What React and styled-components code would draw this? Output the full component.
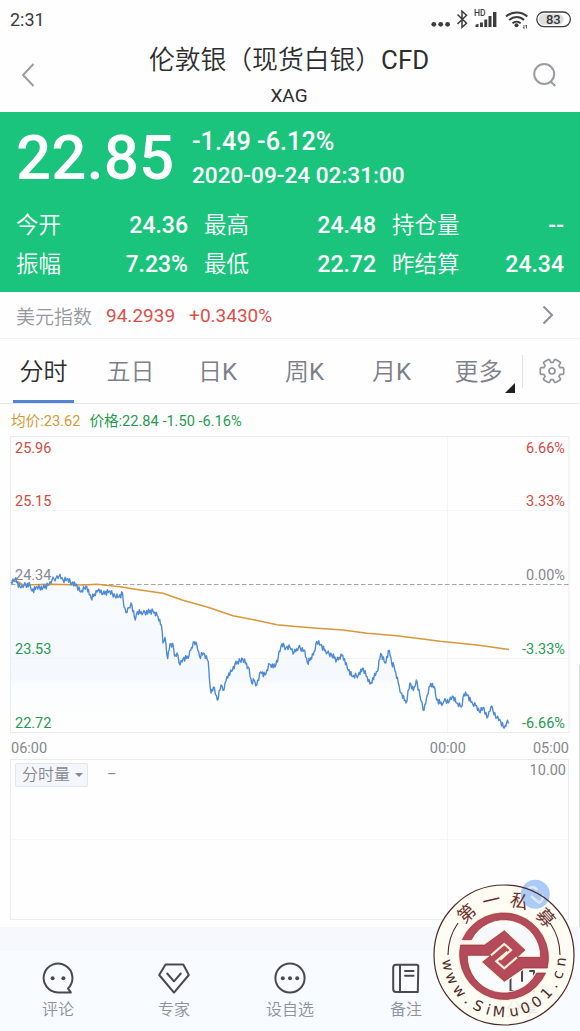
import React from 'react';
import styled, { createGlobalStyle } from 'styled-components';

const AVERAGE = [
  [11.3, 580.7], [18, 581.7], [23, 585], [50, 584.3], [83, 585], [97, 584.3], [120, 586.7], [140, 590],
  [163, 593.3], [183, 600.3], [208, 607.3], [233, 615.7], [255, 620], [277, 624.7], [290, 626],
  [317, 628.3], [343, 630], [367, 633.3], [397, 635.7], [440, 641.3], [477, 645], [509, 649.5],
];

const PRICE = [
  [11, 582], [15, 579], [20, 587], [24, 585], [30, 585], [32, 591], [37, 587], [43, 588], [48, 585],
  [52, 580], [56, 578], [59, 576], [63, 580], [67, 579], [72, 583], [77, 586], [81, 592], [86, 586],
  [91, 598], [97, 592], [99, 589], [103, 594], [109, 591], [115, 596], [119, 597], [122.5, 593],
  [124, 607], [127, 612.5], [131, 603], [135.3, 620], [137.5, 611.5], [143, 613], [153, 611],
  [158, 616.5], [161.3, 625], [163, 643], [165, 637.5], [167.7, 658.5], [170, 644], [173.3, 646],
  [174.5, 656], [177, 653], [180, 665], [183, 659], [189, 656], [191.5, 647.5], [194, 641.5],
  [197, 646], [199.5, 656.5], [203.5, 653], [208.3, 661.5], [209.3, 677], [211, 693], [213.5, 687],
  [217.3, 700], [221, 685], [224, 690], [227, 676.5], [231.5, 671.5], [235, 664], [242.7, 659],
  [248.3, 667], [251.7, 683], [254, 680], [256.7, 685], [260.7, 672], [265, 675], [269.5, 664],
  [275, 667], [278.3, 656.5], [281.7, 644], [286, 648], [290, 647.5], [294, 652.5], [298.5, 647.5],
  [304, 650], [307.3, 662.5], [313.3, 655], [316.7, 641.5], [320.7, 645], [327.3, 653], [331.7, 655],
  [336.7, 660], [342.7, 655], [347.3, 668], [352.7, 676.5], [358.3, 675], [363.3, 668.5], [370, 684],
  [377.3, 671.5], [380.7, 653.5], [385, 663], [389.3, 650.5], [391.7, 663], [394, 666], [398.3, 683],
  [401, 693], [406, 703], [410, 683], [413.3, 690.5], [416.3, 680], [420, 696.5], [424, 710.5],
  [427.3, 695], [430.7, 683.5], [434, 686.5], [436.7, 700], [442.7, 704], [444, 701], [449.3, 701],
  [453.3, 696.5], [456.7, 703], [461.3, 707], [464, 694], [467.3, 695], [472.7, 704], [476.7, 706],
  [479.3, 711.5], [484, 708], [487, 718], [491, 706.5], [496.7, 718], [500.7, 721.5], [504.3, 728],
  [506.7, 722.5], [509, 723],
];

const NOISE = [0, 2.2, -1.4, 1.7, -2.4, 0.8, -1.2, 2.6, -2, 1.1, -0.6, 1.8, -2.2];

// minute ticks between the main turning points
function withTicks(points) {
  const out = [];
  let n = 0;
  points.forEach(([x, y], i) => {
    out.push([x, y]);
    const next = points[i + 1];
    if (!next) return;
    const steps = Math.max(1, Math.round((next[0] - x) / 0.9));
    for (let s = 1; s < steps; s += 1) {
      const t = s / steps;
      n += 1;
      out.push([x + (next[0] - x) * t, y + (next[1] - y) * t + NOISE[n % NOISE.length] * 1.1]);
    }
  });
  return out;
}

const toPath = (points) => points.map(([x, y]) => `${x.toFixed(1)},${y.toFixed(1)}`).join(' ');

const priceTicks = toPath(withTicks(PRICE));

// six teeth, each with a base and a tip on both sides
const gear = toPath(
  [0, 60, 120, 180, 240, 300].flatMap((tooth) =>
    [[-22, 8.8], [-17, 11.6], [-12, 12], [12, 12], [17, 11.6], [22, 8.8]].map(([offset, r]) => {
      const a = ((tooth + offset) * Math.PI) / 180;
      return [13 + r * Math.cos(a), 13 + r * Math.sin(a)];
    })
  )
);

const STATS = [
  ['今开', '24.36'], ['最高', '24.48'], ['持仓量', '--'],
  ['振幅', '7.23%'], ['最低', '22.72'], ['昨结算', '24.34'],
];

const TABS = [['分时'], ['五日'], ['日', 'K'], ['周', 'K'], ['月', 'K'], ['更多']];

const LEVELS = [
  ['25.96', '6.66%', '#d24b45', 13],
  ['25.15', '3.33%', '#d24b45', 66],
  ['24.34', '0.00%', '#85878e', 140],
  ['23.53', '-3.33%', '#1f9c50', 214],
  ['22.72', '-6.66%', '#1f9c50', 288],
];

function StatusIcons() {
  return (
    <svg width="144" height="24" viewBox="428 8 144 24" fill="none" stroke="#3c3c3c">
      <g fill="#3c3c3c" stroke="none">
        <circle cx="433.8" cy="24.3" r="2.4" />
        <circle cx="440.7" cy="24.3" r="2.4" />
        <circle cx="447.6" cy="24.3" r="2.4" />
        <path d="M475.5 27v-2.2l3-1V27zM480 27v-4.5h2.9V27zM484.3 27v-7.5h2.9V27zM488.5 27V16h3v11zM493 27V12h3.4v15z" />
        <circle cx="516.5" cy="25.3" r="2" />
      </g>
      <path d="M457.5 14.5l9 8.8-4.5 4V11.2l4.5 4-9 8.8" strokeWidth="1.5" />
      <text x="474" y="16.2" fill="#3c3c3c" stroke="none" fontSize="8.5" fontWeight="500" fontFamily="Roboto, sans-serif">HD</text>
      <path d="M506 16.6c6-5.4 15.5-5.4 21.3 0M509.2 20.1c4.4-4 10.5-4 14.8 0M512.5 23.3c2.4-2.2 5.8-2.2 8.2 0" strokeWidth="2" />
      <path d="M524 25v3.5M526.4 25v3.5M523.2 27.2l.8 1.3M525.6 26.3l.8-1.3" strokeWidth="0.8" />
      <rect x="536.8" y="12" width="33.6" height="14.6" rx="7.3" fill="#fff" strokeWidth="1.3" />
      <rect x="538.6" y="13.8" width="25" height="11" rx="5.5" fill="#dedede" stroke="none" />
      <text x="553.3" y="23.8" fill="#333" stroke="none" textAnchor="middle" fontSize="13" fontWeight="500" fontFamily="Roboto, sans-serif">83</text>
    </svg>
  );
}

function PriceChart() {
  return (
    <ChartSvg viewBox="10 436 560 297" width="560" height="297">
      <defs>
        <linearGradient id="area" x1="0" y1="575" x2="0" y2="715" gradientUnits="userSpaceOnUse">
          <stop offset="0" stopColor="#f7fbfe" />
          <stop offset="0.75" stopColor="#f5f9fe" />
          <stop offset="0.78" stopColor="#fafcff" />
          <stop offset="1" stopColor="#fefefe" />
        </linearGradient>
      </defs>
      <polygon points={`11,732 ${priceTicks} 509,732`} fill="url(#area)" />
      <path d="M11 510.5h558M11 658.5h558M447.5 437v295" stroke="#f3f5f7" fill="none" />
      <rect x="10.5" y="436.5" width="558.5" height="296" fill="none" stroke="#e9ecef" />
      <path d="M11 584.5h558" stroke="#a2a4a8" strokeDasharray="4.5 2.5" fill="none" />
      <polyline points={toPath(AVERAGE)} fill="none" stroke="#d9973a" strokeWidth="1.5" />
      <polyline points={priceTicks} fill="none" stroke="#4f8ad8" strokeWidth="1.4" strokeLinejoin="round" />
    </ChartSvg>
  );
}

const TOP_TEXT = [['第', -42], ['一', -13], ['私', 16], ['募', 48]];
const SITE_TEXT = [
  ['w', 80], ['w', 66], ['w', 51], ['.', 39], ['S', 27], ['i', 16], ['M', 5],
  ['u', -10], ['0', -22], ['0', -35], ['1', -48], ['.', -59], ['c', -70], ['n', -83],
];

const COIN = 'M21 96A135 135 0 0 1 276 181L205 181 147 221 82 163 107 143 36 143A110 110 0 0 0 244 196L271 196A135 135 0 0 1 16 112L88 112 147 69 209 127 185 149 256 149A110 110 0 0 0 48 96Z';

function Stamp() {
  return (
    <StampSvg width="144" height="144" viewBox="-72 -72 144 144">
      <path d="M-70 0a70 70 0 1 0 140 0a70 70 0 1 0-140 0zM-45 1a45 45 0 1 1 90 0a45 45 0 1 1-90 0z" fillRule="evenodd" fill="#fffdf0" fillOpacity="0.82" />
      <circle cx="31.3" cy="-60.8" r="14.5" fill="#a9cbf5" />
      <path d="M24-66c3-3 8-2 9 1M38-60c2 3 0 7-4 8M27-59l7 6" stroke="#dce9fa" strokeWidth="2.5" fill="none" />
      <circle r="70" fill="none" stroke="#4e2a28" strokeWidth="1.2" />
      <path d="M-56 0A56 56 0 0 1-46-32M46-32A56 56 0 0 1 56 0" fill="none" stroke="#4e2a28" strokeWidth="1.1" />
      <g transform="translate(-48.7 -47.3) scale(.3333)">
        <path d={COIN} fill="#b54a5c" stroke="#fff3d2" strokeWidth="9" strokeLinejoin="round" paintOrder="stroke" />
        <path d={COIN} fill="none" stroke="#8b2e40" strokeWidth="2" />
        <path d="M107 143L147 109 167 127 135 156M185 149L147 182 123 161 156 132" fill="none" stroke="#fff3d2" strokeWidth="6.5" />
      </g>
      {TOP_TEXT.map(([char, angle]) => (
        <StampHan key={char} transform={`rotate(${angle}) translate(0 -49.5)`}>{char}</StampHan>
      ))}
      {SITE_TEXT.map(([char, angle]) => (
        <StampLatin key={angle} transform={`rotate(${angle}) translate(0 62)`}>{char}</StampLatin>
      ))}
    </StampSvg>
  );
}

function NavDot({ x }) {
  return <circle cx={x} cy="17.2" r="2" fill="#4a4a4c" stroke="none" />;
}

const NAV = [
  ['评论', <><path d="M27 27.4A14.4 14.4 0 1 0 17 31.4H29.8Z" /><NavDot x={11.6} /><NavDot x={22.4} /></>],
  ['专家', <path d="M8.5 3.5h17.8L31.8 14 17 31.6 2.2 14zM10.2 12.5l6.8 7.8 6.8-7.8" />],
  ['设自选', <><circle cx="17" cy="17" r="14.6" /><NavDot x={9.8} /><NavDot x={17} /><NavDot x={24.2} /></>],
  ['备注', <path d="M7 3.8h20.5q1.8 0 1.8 1.8L28.8 31H7q-2.8 0-2.8-3V6.8q0-3 2.8-3zM11 4v27M16 10h8.5M16 14.8h8.5" />],
  ['分享', <path d="M9 10H5.5v20H29V10h-4M17 20V9" />],
];

function App() {
  return (
    <Screen>
      <GlobalStyle />
      <StatusBar>
        <span>2:31</span>
        <StatusIcons />
      </StatusBar>

      <Header>
        <HeaderSide>
          <svg width="14" height="24" viewBox="0 0 14 24" fill="none" stroke="#9a9ca3" strokeWidth="2">
            <path d="M12.5 1L2 12l10.5 11" />
          </svg>
        </HeaderSide>
        <Heading>
          <Title>伦敦银（现货白银）<Latin>CFD</Latin></Title>
          <Symbol>XAG</Symbol>
        </Heading>
        <HeaderSide $end>
          <svg width="24" height="24" viewBox="0 0 24 24" fill="none" stroke="#9a9ca3" strokeWidth="2">
            <circle cx="11.2" cy="11" r="10" />
            <path d="M17.5 18.5l4.8 4.5" />
          </svg>
        </HeaderSide>
      </Header>

      <Quote>
        <QuoteTop>
          <Price>22.85</Price>
          <div>
            <Change>-1.49 -6.12%</Change>
            <Time>2020-09-24 02:31:00</Time>
          </div>
        </QuoteTop>
        <Stats>
          {STATS.map(([label, value]) => (
            <Stat key={label}>
              <StatLabel>{label}</StatLabel>
              <span>{value}</span>
            </Stat>
          ))}
        </Stats>
      </Quote>

      <IndexRow>
        <IndexName>美元指数</IndexName>
        <span>94.2939</span>
        <span>+0.3430%</span>
        <svg width="12" height="20" viewBox="0 0 12 20" fill="none" stroke="#8d8f96" strokeWidth="2">
          <path d="M1.5 1.5l8.5 8.5-8.5 8.5" />
        </svg>
      </IndexRow>

      <Tabs>
        {TABS.map(([tab, latin], i) => (
          <Tab key={tab} $active={i === 0}>
            {tab}
            {latin && <Latin>{latin}</Latin>}
            {tab === '更多' && <Corner />}
          </Tab>
        ))}
        <Settings>
          <svg width="26" height="26" viewBox="0 0 26 26" fill="none" stroke="#93959c" strokeWidth="1.7" strokeLinejoin="round">
            <polygon points={gear} />
            <circle cx="13" cy="13" r="3" />
          </svg>
        </Settings>
      </Tabs>

      <Legend>
        <LegendItem $color="#d69a35">均价:23.62</LegendItem>
        <LegendItem $color="#1f9c50">价格:22.84 -1.50 -6.16%</LegendItem>
      </Legend>

      <Chart>
        <PriceChart />
        {LEVELS.map(([price, percent, color, y]) => (
          <Level key={price} $color={color} $y={y}>
            <span>{price}</span>
            <span>{percent}</span>
          </Level>
        ))}
      </Chart>
      <TimeAxis>
        <span>06:00</span>
        <Midnight>00:00</Midnight>
        <span>05:00</span>
      </TimeAxis>

      <Volume>
        <VolumeHead>
          <VolumeSelect>
            分时量
            <Caret />
          </VolumeSelect>
          <span>–</span>
          <VolumeMax>10.00</VolumeMax>
        </VolumeHead>
      </Volume>
      <Strip />

      <Nav>
        {NAV.map(([label, icon]) => (
          <NavItem key={label}>
            <NavIcon viewBox="0 0 34 34">{icon}</NavIcon>
            {label}
          </NavItem>
        ))}
      </Nav>

      <ScrollBar />
      <Stamp />
    </Screen>
  );
}

export default App;

const GlobalStyle = createGlobalStyle`
  * {
    box-sizing: border-box;
  }
  body {
    margin: 0;
    background: #fff;
    font-family: Roboto, "Noto Sans CJK SC", sans-serif;
  }
  svg {
    display: block;
    flex-shrink: 0;
  }
`;

const Screen = styled.div`
  position: relative;
  width: 580px;
  height: 1031px;
  overflow: hidden;
  display: flex;
  flex-direction: column;
  background: #fefefe;
`;

const Latin = styled.span`
  font-weight: 400;
`;

const StatusBar = styled.div`
  height: 40px;
  flex-shrink: 0;
  padding: 0 8px 2px 10px;
  display: flex;
  align-items: center;
  justify-content: space-between;
  font-size: 18px;
  color: #3c3c3c;

  svg {
    margin-top: 2px;
  }
`;

const Header = styled.div`
  height: 72px;
  flex-shrink: 0;
  padding: 0 23px 0 21px;
  display: flex;
  align-items: center;
`;

const HeaderSide = styled.div`
  flex: 1;
  display: flex;
  justify-content: ${({ $end }) => ($end ? 'flex-end' : 'flex-start')};
  padding-bottom: 2px;
`;

const Heading = styled.div`
  text-align: center;
  color: #2e2e30;
`;

const Title = styled.div`
  font-size: 25.8px;
  font-weight: 350;
  line-height: 39px;
  white-space: nowrap;
`;

const Symbol = styled.div`
  font-size: 19px;
  line-height: 32px;
`;

const Quote = styled.div`
  height: 180px;
  flex-shrink: 0;
  padding: 12px 16px 0;
  background: #1bc47d;
  color: #fff;
`;

const QuoteTop = styled.div`
  display: flex;
  height: 82px;
`;

const Price = styled.div`
  width: 176px;
  font-size: 62px;
  font-weight: 500;
  line-height: 67px;
`;

const Change = styled.div`
  font-size: 25.3px;
  font-weight: 500;
  line-height: 35px;
`;

const Time = styled.div`
  font-size: 22.6px;
  font-weight: 500;
  line-height: 33px;
  white-space: nowrap;
`;

const Stats = styled.div`
  display: grid;
  grid-template-columns: 172px 172px 172px;
  column-gap: 16px;
`;

const Stat = styled.div`
  display: flex;
  justify-content: space-between;
  line-height: 39px;
  font-size: 23px;
  font-weight: 500;
`;

const StatLabel = styled.span`
  font-size: 22.5px;
  font-weight: 350;
`;

const IndexRow = styled.div`
  height: 47px;
  flex-shrink: 0;
  padding: 0 26px 0 16px;
  display: flex;
  align-items: center;
  gap: 14px;
  border-bottom: 1px solid #f1f1f3;
  color: #db504a;
  font-size: 19px;

  svg {
    margin-left: auto;
  }
`;

const IndexName = styled.span`
  color: #9698a0;
  font-size: 19px;
  font-weight: 350;
`;

const Tabs = styled.div`
  height: 65px;
  flex-shrink: 0;
  display: flex;
  border-bottom: 1px solid #e5e7ea;
`;

const Tab = styled.div`
  position: relative;
  width: 87px;
  line-height: 66px;
  text-align: center;
  font-size: 24px;
  font-weight: 350;
  color: ${({ $active }) => ($active ? '#2c2c2e' : '#7d8088')};

  &::after {
    content: '';
    display: ${({ $active }) => ($active ? 'block' : 'none')};
    position: absolute;
    left: 13px;
    right: 13px;
    bottom: 0;
    height: 3px;
    background: #5584d6;
  }
`;

const Corner = styled.i`
  position: absolute;
  right: 7px;
  bottom: 10px;
  border-left: 10px solid transparent;
  border-bottom: 10px solid #1f1f22;
`;

const Settings = styled.div`
  flex: 1;
  height: 33px;
  margin: 16px 0 0;
  padding: 0 0 2px 16px;
  display: flex;
  align-items: center;
  border-left: 1px solid #e2e3e6;
`;

const Legend = styled.div`
  height: 32px;
  flex-shrink: 0;
  padding: 0 0 2px 11px;
  display: flex;
  align-items: center;
  gap: 9px;
  font-size: 14.6px;
`;

const LegendItem = styled.span`
  color: ${({ $color }) => $color};
`;

const Chart = styled.div`
  position: relative;
  height: 297px;
  flex-shrink: 0;
  margin: 0 10px;
`;

const ChartSvg = styled.svg`
  width: 560px;
  height: 297px;
`;

const Level = styled.div`
  position: absolute;
  left: 5px;
  right: 5px;
  top: ${({ $y }) => $y - 10}px;
  line-height: 20px;
  display: flex;
  justify-content: space-between;
  font-size: 14.5px;
  color: ${({ $color }) => $color};
`;

const TimeAxis = styled.div`
  height: 26px;
  flex-shrink: 0;
  padding: 4px 11px 0 11px;
  display: flex;
  align-items: center;
  font-size: 14.5px;
  color: #85878e;
`;

const Midnight = styled.span`
  margin-left: auto;
  margin-right: 67px;
`;

const Volume = styled.div`
  height: 161px;
  flex-shrink: 0;
  margin: 0 11px 0 10px;
  border: 1px solid #e9ecef;
  background:
    linear-gradient(#f3f5f7, #f3f5f7) 0 79px / 100% 1px no-repeat,
    linear-gradient(#f3f5f7, #f3f5f7) 436px 0 / 1px 100% no-repeat;
`;

const VolumeHead = styled.div`
  display: flex;
  padding: 3px 2px 0 4px;
  font-size: 14.5px;
  line-height: 24px;
  color: #85878e;
`;

const VolumeSelect = styled.div`
  width: 73px;
  height: 24px;
  margin-right: 19px;
  padding-left: 6px;
  display: flex;
  align-items: center;
  gap: 5px;
  border: 1px solid #e4e6ed;
  border-radius: 2px;
  background: #f5f6fb;
  font-size: 16px;
  font-weight: 350;
`;

const Caret = styled.i`
  border: 4px solid transparent;
  border-top-color: #85878e;
  border-bottom: 0;
`;

const VolumeMax = styled.span`
  margin-left: auto;
  line-height: 16px;
`;

const Strip = styled.div`
  height: 24px;
  flex-shrink: 0;
  margin-top: 7px;
  background: #f7f7fe;
`;

const Nav = styled.div`
  flex: 1;
  display: flex;
  background: #f8fbff;
`;

const NavItem = styled.div`
  width: 116px;
  padding-top: 10px;
  display: flex;
  flex-direction: column;
  align-items: center;
  font-size: 16px;
  font-weight: 350;
  line-height: 30px;
  color: #909299;
`;

const NavIcon = styled.svg`
  width: 34px;
  height: 34px;
  fill: none;
  stroke: #4a4a4c;
  stroke-width: 2;
  stroke-linecap: round;
  stroke-linejoin: round;
`;

const ScrollBar = styled.div`
  position: absolute;
  right: 0;
  top: 665px;
  width: 1px;
  height: 262px;
  background: #dcdde0;
`;

const StampSvg = styled.svg`
  position: absolute;
  left: 431.5px;
  top: 883.3px;
  overflow: visible;
`;

const StampHan = styled.text`
  font-family: "Noto Sans CJK SC", sans-serif;
  font-size: 18px;
  font-weight: 400;
  fill: #6d302e;
  text-anchor: middle;
`;

const StampLatin = styled.text`
  font-family: "DejaVu Sans", sans-serif;
  font-size: 14.5px;
  fill: #4e2a28;
  text-anchor: middle;
`;
